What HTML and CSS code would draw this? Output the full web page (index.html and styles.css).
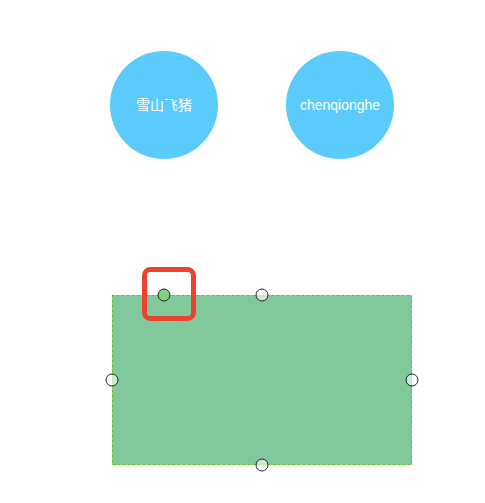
FILE: index.html
```html
<!DOCTYPE html>
<html>
<head>
<meta charset="utf-8">
<link rel="stylesheet" href="styles.css">
</head>
<body>
<div class="canvas">
  <svg class="diagram" width="485" height="503" viewBox="0 0 485 503">
    <circle class="node" cx="164" cy="105" r="54"/>
    <text class="label" x="164" y="110">雪山飞猪</text>
    <circle class="node" cx="340" cy="105" r="54"/>
    <text class="label" x="340" y="110">chenqionghe</text>

    <rect class="shape" x="112.5" y="295.5" width="299" height="169"/>
    <rect class="edge" x="112.5" y="295.5" width="299" height="169"/>
    <rect class="edge-dots" x="112.5" y="295.5" width="299" height="169"/>

    <rect class="focus" x="144.5" y="269.5" width="49" height="49" rx="6" ry="6"/>

    <circle class="handle active" cx="164" cy="295" r="6"/>
    <circle class="handle" cx="262" cy="295" r="6"/>
    <circle class="handle" cx="112" cy="380" r="6"/>
    <circle class="handle" cx="412" cy="380" r="6"/>
    <circle class="handle" cx="262" cy="465" r="6"/>
  </svg>
</div>
</body>
</html>
```
FILE: styles.css
```css
html, body {
  margin: 0;
  padding: 0;
  background: #ffffff;
}
.canvas {
  position: relative;
  width: 485px;
  height: 503px;
  overflow: hidden;
}
.diagram {
  display: block;
}
.node {
  fill: #5bcbfc;
}
.label {
  fill: #ffffff;
  font-family: "Liberation Sans", "Noto Sans CJK SC", sans-serif;
  font-size: 14px;
  text-anchor: middle;
}
.shape {
  fill: #81c99c;
}
.edge {
  fill: none;
  stroke: #7ee03e;
  stroke-width: 1;
}
.edge-dots {
  fill: none;
  stroke: #6f6a9c;
  stroke-width: 1;
  stroke-dasharray: 1 4;
}
.focus {
  fill: none;
  stroke: #e8432d;
  stroke-width: 5;
}
.handle {
  fill: rgba(255, 255, 255, 0.6);
  stroke: #222222;
  stroke-width: 1;
}
.handle.active {
  fill: #7fd07f;
}
```
